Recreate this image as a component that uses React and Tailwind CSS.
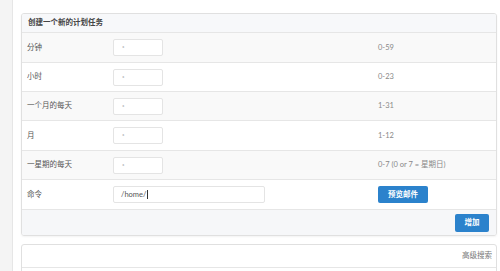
const rows = [
  { label: "分钟", value: "*", hint: "0-59", h: "h-[29px]" },
  { label: "小时", value: "*", hint: "0-23", h: "h-[28px]" },
  { label: "一个月的每天", value: "*", hint: "1-31", h: "h-[28px]" },
  { label: "月", value: "*", hint: "1-12", h: "h-[29px]" },
  { label: "一星期的每天", value: "*", hint: "0-7 (0 or 7 = 星期日)", h: "h-[28px]" },
];

const font = { fontFamily: "Lato, 'Noto Sans CJK SC', sans-serif" };

function Row({ label, value, hint, striped, h }) {
  return (
    <div className={`flex ${h} box-content items-center border-t border-[#e6e6e6] ${striped ? "bg-[#f9f9f9]" : "bg-white"}`}>
      <div className="w-[86px] shrink-0 pl-[5px] text-[#555]">{label}</div>
      <div className="w-[265px] shrink-0 pl-[5px]">
        <div className="flex h-[17px] w-[50px] items-center rounded-[2px] border border-[#e4e4e4] bg-white pl-[8px] text-[6px] text-[#777]">
          {value}
        </div>
      </div>
      <div className="pl-[5px] text-[#888]">{hint}</div>
    </div>
  );
}

export default function App() {
  return (
    <div className="flex h-[271px] w-[500px] overflow-hidden bg-white text-[7.5px]" style={font}>
      <div className="w-[13px] shrink-0 border-r border-[#e6e6e6] bg-[#f4f4f4]" />
      <div className="flex-1 pl-[8px] pr-[3px] pt-[13px]">
        <div className="overflow-hidden rounded-[3px] border border-[#e0e0e0] shadow-[0_1px_2px_rgba(0,0,0,0.05)]">
          <div className="flex h-[18px] items-center bg-[#f7f8fa] pl-[6px] font-bold text-[#444]">
            创建一个新的计划任务
          </div>
          {rows.map((r, i) => (
            <Row key={r.label} {...r} striped={i % 2 === 0} />
          ))}
          <div className="box-content flex h-[29px] items-center border-t border-[#e6e6e6] bg-white">
            <div className="w-[86px] shrink-0 pl-[5px] text-[#555]">命令</div>
            <div className="w-[265px] shrink-0 pl-[5px]">
              <div className="flex h-[17px] w-[152px] items-center rounded-[2px] border border-[#e4e4e4] bg-white pl-[7px] text-[#555]">
                /home/<span className="ml-px inline-block h-[9px] w-px bg-[#333]" />
              </div>
            </div>
            <div className="pl-[5px]">
              <button className="h-[17px] w-[50px] rounded-[2px] bg-[#2b82cc] font-bold text-white">预览邮件</button>
            </div>
          </div>
          <div className="box-content flex h-[25px] items-center justify-end border-t border-[#e6e6e6] bg-[#f6f7f9] pr-[7px]">
            <button className="h-[18px] w-[34px] rounded-[2px] bg-[#2b82cc] font-bold text-white">增加</button>
          </div>
        </div>
        <div className="mt-[8px] rounded-[3px] border border-[#e0e0e0] bg-white">
          <div className="flex h-[22px] items-center justify-end pr-[4px] text-[#777]">高级搜索</div>
          <div className="h-[10px] border-t border-[#e6e6e6]" />
        </div>
      </div>
    </div>
  );
}
